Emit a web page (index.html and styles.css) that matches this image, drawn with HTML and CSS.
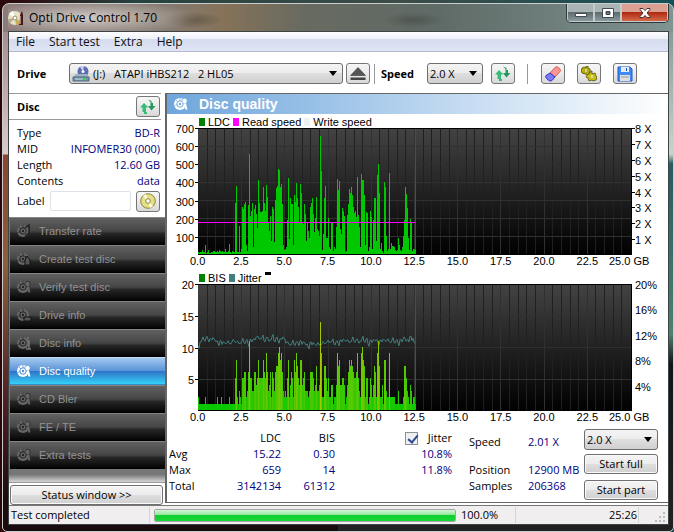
FILE: index.html
```
<!DOCTYPE html>
<html lang="en">
<head>
    <meta charset="UTF-8">
    <meta name="viewport" content="width=device-width, initial-scale=1.0">
    <title>Opti Drive Control 1.70</title>
    <link rel="stylesheet" href="styles.css">
</head>
<body>
    <!-- Shared icons -->
    <svg class="sprite" aria-hidden="true">
        <symbol id="refresh" viewBox="0 0 16 16">
            <path d="M4 4L0 8.500h2.500V13H4v2h3v-2H6V8.500h2.500z" fill="#35bd77"/>
            <path d="M8 .5L10.500 3v4H8l3.500 4.500L15.500 7H13V4h-1.500V2z" fill="#219a5b"/>
        </symbol>
        <symbol id="disc" viewBox="0 0 16 16">
            <circle cx="7" cy="8" r="6" fill="currentColor"/>
            <circle cx="7" cy="8" r="3.200" fill="none" stroke="var(--hole)" stroke-width="1"/>
            <circle cx="7" cy="8" r="1.200" fill="var(--hole)"/>
            <path d="M7 2v3M1.500 9.500l3-.8M3 4l2 2" stroke="var(--hole)" stroke-width=".7"/>
        </symbol>
        <symbol id="arrow" viewBox="0 0 8 5">
            <path d="M0 0h8L4 5z" fill="#000"/>
        </symbol>
        <symbol id="lens" viewBox="0 0 16 16">
            <circle cx="11.500" cy="5" r="2.700" fill="currentColor" stroke="var(--hole)" stroke-width=".7"/>
            <path d="M12 7.500l1.500 6" stroke="currentColor" stroke-width="2"/>
        </symbol>
    </svg>

    <div class="window">
        <header class="titlebar">
            <svg class="app-icon" viewBox="0 0 16 16">
                <circle cx="7" cy="8" r="7" fill="#e9e3c6"/>
                <path d="M7 8L1 4a7 7 0 0 1 4-3z" fill="#fff"/>
                <path d="M7 8l6 4a7 7 0 0 1-5 3z" fill="#c8ac55"/>
                <path d="M7 8L2 13a7 7 0 0 1-2-4z" fill="#b3ad92"/>
                <circle cx="7" cy="8" r="2" fill="#fff" stroke="#998f6c"/>
                <path d="M12 5l2-4 1 4v10h-4z" fill="#4a1712"/>
                <path d="M12 6v8" stroke="#eee"/>
            </svg>
            <h1>Opti Drive Control 1.70</h1>
            <div class="caption-buttons">
                <button class="caption" aria-label="Minimize"><svg viewBox="0 0 14 10"><path d="M1.500 5.500h11v3h-11z" fill="#fff" stroke="#444b52"/></svg></button>
                <button class="caption" aria-label="Maximize"><svg viewBox="0 0 14 10"><path d="M1.500 .5h11v9h-11zM5 3.500v3h4v-3z" fill="#fff" fill-rule="evenodd" stroke="#444b52"/></svg></button>
                <button class="caption close" aria-label="Close"><svg viewBox="0 0 14 10"><path d="M2 .5h3l2 2 2-2h3v1L9 5l3 3.500v1H9l-2-2-2 2H2v-1L5 5 2 1.500z" fill="#fff" stroke="#4a3030"/></svg></button>
            </div>
        </header>

        <div class="client">
            <nav class="menubar">
                <a href="#">File</a>
                <a href="#">Start test</a>
                <a href="#">Extra</a>
                <a href="#">Help</a>
            </nav>

            <div class="toolbar">
                <label class="drive-label" for="drive">Drive</label>
                <div class="combo drive">
                    <svg class="drive-icon" viewBox="0 0 18 16">
                        <circle cx="11" cy="5.500" r="5.500" fill="#5f6db0"/>
                        <path d="M11 5.500L8 1a5 5 0 0 1 4-1z" fill="#c8d2f2"/>
                        <circle cx="11" cy="5.500" r="1.500" fill="#fff"/>
                        <path d="M4 8h11l2 3H1z" fill="#9fb1bf"/>
                        <path d="M1 11h16v4H1z" fill="#7391a6" stroke="#4f6c82"/>
                        <path d="M3 13h8" stroke="#d5e2ea"/>
                        <path d="M12 12h2v2h-2z" fill="#3be55a"/>
                    </svg>
                    <select id="drive"><option>(J:)&nbsp;&nbsp; ATAPI iHBS212&nbsp;&nbsp; 2 HL05</option></select>
                    <svg class="arrow"><use href="#arrow"/></svg>
                </div>
                <button class="tool eject" aria-label="Eject">
                    <svg viewBox="0 0 16 16"><path d="M8 1.500l7.500 8H.5z" fill="#555" stroke="#222" stroke-width=".5"/><path d="M.5 11.500h15v2.500H.5z" fill="#444"/></svg>
                </button>
                <span class="separator"></span>
                <label class="speed-label" for="speed">Speed</label>
                <div class="combo speed">
                    <select id="speed"><option>2.0 X</option></select>
                    <svg class="arrow"><use href="#arrow"/></svg>
                </div>
                <button class="tool" aria-label="Refresh"><svg><use href="#refresh"/></svg></button>
                <span class="separator wide"></span>
                <div class="tool-group">
                    <button class="tool" aria-label="Erase disc">
                        <svg viewBox="0 0 16 16">
                            <path d="M5 7l5-5.500q1-1 2.500-.5l2 1.500q1.500 1.500.5 3L10 11z" fill="#f79a93" stroke="#e0544e"/>
                            <path d="M5 7l5 4-3 3.500q-1.500 1-3 0l-2.500-2q-1.500-1.500-.5-3z" fill="#7a7af5" stroke="#3434c4"/>
                        </svg>
                    </button>
                    <button class="tool" aria-label="Settings">
                        <svg viewBox="0 0 16 16">
                            <path d="M1 2l2-1 2 1V0h2v2l2 1v3l-2 3-3-1-3-1-1-3z" fill="#b5ae0a" stroke="#55500a" stroke-width=".8"/>
                            <path d="M7 8l2-1 1-2h1v3l3-1 1 3 1 1-1 3-3 1-1-1-3 1-1-3-2-1z" fill="#c8c010" stroke="#55500a" stroke-width=".8"/>
                            <path d="M5 3v3M11 9v3" stroke="#eee" stroke-width="1.200"/>
                        </svg>
                    </button>
                    <button class="tool" aria-label="Save">
                        <svg viewBox="0 0 16 16">
                            <path d="M1 1h12l2 2v12H1z" fill="#3f8af4" stroke="#1b58cc"/>
                            <path d="M4 1h8v5H4z" fill="#e5edf8"/><path d="M9 2h1v3H9z" fill="#1b58cc"/>
                            <path d="M3 9h10v6H3z" fill="#dedede"/><path d="M4 11h8" stroke="#999"/>
                        </svg>
                    </button>
                </div>
            </div>

            <div class="workspace">
                <aside class="sidebar">
                    <div class="disc-head">
                        <h2>Disc</h2>
                        <button class="tool" aria-label="Refresh disc"><svg><use href="#refresh"/></svg></button>
                    </div>
                    <div class="disc-info">
                        <dl>
                            <div><dt>Type</dt><dd>BD-R</dd></div>
                            <div><dt>MID</dt><dd>INFOMER30 (000)</dd></div>
                            <div><dt>Length</dt><dd>12.60 GB</dd></div>
                            <div><dt>Contents</dt><dd>data</dd></div>
                        </dl>
                        <div class="label-row">
                            <label for="disc-label">Label</label>
                            <input id="disc-label" type="text">
                            <button class="tool" aria-label="Read label">
                                <svg viewBox="0 0 16 16">
                                    <circle cx="8" cy="8" r="7.300" fill="#e6df86" stroke="#8a8440"/>
                                    <path d="M8 8L3 3a7 7 0 0 1 3-2zM8 8l5 5a7 7 0 0 1-3 2z" fill="#fffde0"/>
                                    <circle cx="8" cy="8" r="2.300" fill="#fff" stroke="#8a8440"/>
                                </svg>
                            </button>
                        </div>
                    </div>
                    <div class="tests">
                        <button class="test"><svg><use href="#disc"/><path d="M9 5l4-3v8l-4 3" fill="none" stroke="#222" stroke-width="1.500"/></svg>Transfer rate</button>
                        <button class="test"><svg><use href="#disc"/><path d="M11 5l3 4v5H9V9z" fill="#555" stroke="#111"/></svg>Create test disc</button>
                        <button class="test"><svg><use href="#disc"/><use href="#lens"/></svg>Verify test disc</button>
                        <button class="test"><svg><use href="#disc"/><path d="M8 10h7v4H8z" fill="#555" stroke="#111"/></svg>Drive info</button>
                        <button class="test"><svg><use href="#disc"/><path d="M12 2v2M11 6h2v8M10 14h5" fill="none" stroke="#777" stroke-width="1.500"/></svg>Disc info</button>
                        <button class="test active"><svg><use href="#disc"/><use href="#lens"/></svg>Disc quality</button>
                        <button class="test"><svg><use href="#disc"/><use href="#lens"/></svg>CD Bler</button>
                        <button class="test"><svg><use href="#disc"/><use href="#lens"/></svg>FE / TE</button>
                        <button class="test"><svg><use href="#disc"/><use href="#lens"/></svg>Extra tests</button>
                    </div>
                    <div class="status-toggle"><button class="push">Status window &gt;&gt;</button></div>
                </aside>

                <main class="panel">
                    <div class="panel-title">
                        <svg><use href="#disc"/><use href="#lens"/></svg>
                        <h2>Disc quality</h2>
                    </div>

                    <section class="chart">
                        <div class="legend">
                            <span><i class="key green"></i>LDC</span>
                            <span><i class="key magenta"></i>Read speed</span>
                            <span><i class="key pale"></i>Write speed</span>
                        </div>
                        <div class="plot-row">
                            <div class="axis left"><span>700</span><span>600</span><span>500</span><span>400</span><span>300</span><span>200</span><span>100</span></div>
                            <svg class="plot" id="ldc" viewBox="0 0 434 127" preserveAspectRatio="none"></svg>
                            <div class="axis right ticks"><span>8 X</span><span>7 X</span><span>6 X</span><span>5 X</span><span>4 X</span><span>3 X</span><span>2 X</span><span>1 X</span></div>
                        </div>
                        <div class="x-axis"><div class="x-steps"><span>0.0</span><span>2.5</span><span>5.0</span><span>7.5</span><span>10.0</span><span>12.5</span><span>15.0</span><span>17.5</span><span>20.0</span><span>22.5</span></div><span class="x-end">25.0 GB</span></div>
                    </section>

                    <section class="chart">
                        <div class="legend">
                            <span><i class="key green"></i>BIS</span>
                            <span><i class="key teal"></i>Jitter</span>
                            <span><i class="dash"></i></span>
                        </div>
                        <div class="plot-row">
                            <div class="axis left"><span>20</span><span>15</span><span>10</span><span>5</span></div>
                            <svg class="plot" id="bis" viewBox="0 0 434 127" preserveAspectRatio="none"></svg>
                            <div class="axis right"><span>20%</span><span>16%</span><span>12%</span><span>8%</span><span>4%</span></div>
                        </div>
                        <div class="x-axis"><div class="x-steps"><span>0.0</span><span>2.5</span><span>5.0</span><span>7.5</span><span>10.0</span><span>12.5</span><span>15.0</span><span>17.5</span><span>20.0</span><span>22.5</span></div><span class="x-end">25.0 GB</span></div>
                    </section>

                    <section class="results">
                        <table>
                            <thead>
                                <tr>
                                    <td></td><th>LDC</th><th>BIS</th>
                                    <th class="jitter"><div><input type="checkbox" id="jitter" checked><label for="jitter">Jitter</label></div></th>
                                </tr>
                            </thead>
                            <tbody>
                                <tr><th>Avg</th><td>15.22</td><td>0.30</td><td>10.8%</td></tr>
                                <tr><th>Max</th><td>659</td><td>14</td><td>11.8%</td></tr>
                                <tr><th>Total</th><td>3142134</td><td>61312</td><td></td></tr>
                            </tbody>
                        </table>
                        <dl class="progress-info">
                            <dt>Speed</dt><dd>2.01 X</dd>
                            <dt>Position</dt><dd>12900 MB</dd>
                            <dt>Samples</dt><dd>206368</dd>
                        </dl>
                        <div class="actions">
                            <div class="combo">
                                <select aria-label="Test speed"><option>2.0 X</option></select>
                                <svg class="arrow"><use href="#arrow"/></svg>
                            </div>
                            <button class="push">Start full</button>
                            <button class="push">Start part</button>
                        </div>
                    </section>
                </main>
            </div>

            <footer class="statusbar">
                <span class="message">Test completed</span>
                <progress value="100" max="100"></progress>
                <span class="percent">100.0%</span>
                <span class="time">25:26</span>
                <svg class="grip" viewBox="0 0 12 12"><path d="M9 2h2v2H9zM9 6h2v2H9zM9 10h2v2H9zM5 6h2v2H5zM5 10h2v2H5zM1 10h2v2H1z" fill="#bbb"/></svg>
            </footer>
        </div>
    </div>

    <script src="charts.js"></script>
</body>
</html>
```
FILE: styles.css
```
* {
    box-sizing: border-box;
}
body {
    margin: 0;
    min-height: 100vh;
    display: flex;
    padding: 3px 0 0 2px;
    font-family: "Open Sans", "Noto Sans", sans-serif;
    font-size: 11px;
    line-height: 16px;
    color: #000;
    background: linear-gradient(to right, #2c0508, #27423f 20%, #3d4c47 60%, #155058);
}
h1, h2, dl, dd, dt {
    margin: 0;
}
button, select, input {
    font: inherit;
    color: inherit;
    margin: 0;
    padding: 0;
}
.sprite {
    display: none;
}

/* Window frame */
.window {
    flex: 1;
    display: flex;
    flex-direction: column;
    padding: 0 4px 6px 5px;
    border: 1px solid #c9cfce;
    border-radius: 7px 7px 5px 5px;
    background:
        radial-gradient(ellipse 30px 8px at 190px 16px, rgba(60,50,35,0.4), rgba(60,50,35,0)) top / 100% 28px no-repeat,
        radial-gradient(ellipse 30px 8px at 410px 16px, rgba(60,65,60,0.5), rgba(60,65,60,0)) top / 100% 28px no-repeat,
        linear-gradient(to right, #8c7b78, #857a70 25%, #857258 33%, #686a60 45%, #5f6b67 65%, #7f9391) top / 100% 28px no-repeat,
        linear-gradient(to bottom, #9c7e80, #dccac6 150px, #8c4530 151px, #8d5f3c 260px, #501d22 400px, #180c0e 500px) left / 50% 100% no-repeat,
        linear-gradient(to bottom, #75908f, #c9d2cc 150px, #245c62 160px, #4f8070 330px, #11151c 360px, #222) right / 50% 100% no-repeat;
}
.titlebar {
    display: flex;
    align-items: center;
    height: 27px;
    background: radial-gradient(ellipse 110px 18px at 80px 14px, rgba(255,255,255,0.6), rgba(255,255,255,0));
}
.app-icon {
    width: 16px;
    height: 16px;
    margin-right: 5px;
}
.titlebar h1 {
    flex: 1;
    font-size: 12px;
    font-weight: normal;
}
.caption-buttons {
    align-self: flex-start;
    display: flex;
    border: 1px solid #30383a;
    border-top: none;
    border-radius: 0 0 5px 5px;
    overflow: hidden;
}
.caption {
    width: 27px;
    height: 18px;
    border: 1px solid #c3cccd;
    border-top: none;
    background: linear-gradient(#aab4b5 45%, #5f6c6f 50%, #8b9a9d);
    line-height: 0;
}
.caption svg {
    width: 14px;
    height: 10px;
}
.close {
    width: 47px;
    background: linear-gradient(#dba092 45%, #b02a12 50%, #d4694a);
}
.client {
    flex: 1;
    display: flex;
    flex-direction: column;
    background: #fff;
    border: 1px solid #3e4446;
}

/* Menu and toolbar */
.menubar {
    display: flex;
    gap: 14px;
    height: 20px;
    padding: 0 7px;
    border-bottom: 1px solid #b5bad0;
    background: linear-gradient(#fdfdff, #eef1fa 35%, #d5dcef 40%, #dfe5f5);
    font-size: 12px;
    line-height: 20px;
}
.menubar a {
    color: #111;
    text-decoration: none;
}
.toolbar {
    display: flex;
    align-items: center;
    height: 41px;
    padding: 2px 31px 0 8px;
    font-size: 11px;
}
.drive-label {
    width: 52px;
    font-weight: bold;
}
.combo {
    display: flex;
    align-items: center;
    height: 21px;
    padding: 0 5px 0 2px;
    border: 1px solid #6f6f6f;
    border-radius: 3px;
    background: linear-gradient(#f4f4f4, #ececec 48%, #dedede 50%, #d0d0d0);
}
.combo select {
    flex: 1;
    min-width: 0;
    appearance: none;
    border: none;
    background: none;
}
.arrow {
    width: 8px;
    height: 5px;
}
.combo.drive {
    flex: 1;
    margin-right: 3px;
}
.drive-icon {
    width: 18px;
    height: 16px;
    margin-right: 3px;
}
.combo.speed {
    width: 56px;
    margin-right: 8px;
}
.tool {
    display: flex;
    align-items: center;
    justify-content: center;
    width: 24px;
    height: 21px;
    border: 1px solid #777;
    border-radius: 3px;
    background: linear-gradient(#f6f6f6, #eaeaea 50%, #d8d8d8);
}
.tool svg {
    flex: none;
    width: 16px;
    height: 16px;
}
.separator {
    width: 1px;
    height: 20px;
    margin: 0 6px 0 4px;
    background: #999;
}
.separator.wide {
    margin: 0 13px 0 12px;
}
.speed-label {
    width: 46px;
    font-weight: bold;
}
.tool-group {
    display: flex;
    gap: 12px;
}

/* Sidebar */
.workspace {
    flex: 1;
    display: flex;
    border-bottom: 1px solid #777;
}
.sidebar {
    display: flex;
    flex-direction: column;
    width: 156px;
}
.disc-head {
    display: flex;
    align-items: center;
    justify-content: space-between;
    height: 27px;
    margin-right: 4px;
    padding: 0 1px 0 8px;
    border-top: 1px solid #999;
    border-bottom: 1px solid #999;
}
.disc-head h2 {
    font-size: 11px;
}
.disc-info {
    padding: 5px 5px 4px 8px;
}
.disc-info dl div {
    display: flex;
    justify-content: space-between;
}
dd {
    color: #000080;
}
.label-row {
    display: flex;
    align-items: center;
    height: 24px;
}
.label-row label {
    width: 33px;
}
.label-row input {
    flex: 1;
    min-width: 0;
    height: 20px;
    margin-right: 5px;
    border: 1px solid #dfe1e8;
    border-radius: 2px;
}
.tests {
    flex: 1;
    padding-left: 1px;
    background: linear-gradient(#777 250px, #777, #d5d5d5);
}
.test {
    --hole: #222;
    display: flex;
    align-items: center;
    width: 100%;
    height: 28px;
    padding-left: 6px;
    border: none;
    border-top: 1px solid #858585;
    border-bottom: 1px solid #000;
    background: linear-gradient(#616161, #454545 50%, #262626 60%, #050505);
    font-family: "Liberation Sans", Arial, sans-serif;
    font-size: 11px;
    color: #929292;
}
.test svg {
    width: 16px;
    height: 16px;
    margin-right: 7px;
    color: #666;
}
.test.active {
    --hole: #4d8fd8;
    border-top-color: #c4dcf5;
    border-bottom-color: #2e8fc4;
    background: linear-gradient(#a3c8f0, #5a94d8 48%, #2f74c8 52%, #34d2f8);
    color: #fff;
}
.test.active svg {
    color: #fff;
}
.status-toggle {
    padding: 2px 2px 0 1px;
    border-top: 1px solid #999;
}
.push {
    width: 100%;
    height: 20px;
    border: 1px solid #707070;
    border-radius: 3px;
    background: linear-gradient(#f4f4f4, #ececec 48%, #dedede 50%, #d0d0d0);
    box-shadow: inset 0 0 0 1px #fafafa;
    line-height: 16px;
}

/* Disc quality panel */
.panel {
    flex: 1;
    min-width: 0;
    margin-bottom: 2px;
    border: 1px solid #666;
    border-left-width: 2px;
    border-right: none;
}
.panel-title {
    --hole: #75aadd;
    display: flex;
    align-items: center;
    height: 20px;
    padding-left: 6px;
    background: linear-gradient(to right, #6ea6dc, #b0cfec 45%, #fff);
    color: #fff;
}
.panel-title svg {
    width: 16px;
    height: 16px;
    margin-right: 10px;
}
.panel-title h2 {
    font-family: "Liberation Sans", Arial, sans-serif;
    font-size: 14px;
}
.chart {
    font-family: "Liberation Sans", Arial, sans-serif;
    font-size: 11px;
}
.legend {
    display: flex;
    gap: 3px;
    height: 14px;
    padding: 2px 0 0 32px;
    line-height: 12px;
}
.legend span {
    display: flex;
    align-items: center;
}
.key {
    width: 6px;
    height: 8px;
    margin-right: 3px;
}
.green {
    background: #008000;
}
.magenta {
    background: #ff00ff;
}
.pale {
    background: #f0f0f0;
}
.teal {
    background: #408080;
}
.dash {
    width: 6px;
    height: 3px;
    margin-bottom: 9px;
    background: #000;
}
.plot-row {
    display: flex;
    height: 127px;
}
.plot {
    flex: 1;
    min-width: 0;
    height: 127px;
}
.axis {
    display: flex;
    flex-direction: column;
}
.axis span {
    flex: 1;
    display: flex;
    align-items: flex-start;
    line-height: 2px;
}
.axis.left {
    width: 31px;
}
.axis.left span {
    justify-content: flex-end;
}
.axis.left span::after {
    content: "";
    width: 3px;
    height: 1px;
    margin-left: 1px;
    background: #000;
}
.axis.right {
    width: 36px;
    padding-left: 3px;
}
.axis.ticks {
    padding-left: 0;
}
.axis.ticks span::before {
    content: "";
    width: 3px;
    height: 1px;
    background: #000;
}
.x-axis {
    display: flex;
    height: 15px;
    padding-left: 9px;
    line-height: 13px;
}
.x-steps {
    flex: 1;
    display: flex;
}
.x-steps span {
    flex: 1;
    text-align: center;
}
.x-end {
    width: 59px;
}

/* Results */
.results {
    display: flex;
    align-items: flex-start;
    padding: 3px 10px 0 2px;
}
.results table {
    width: 283px;
    margin-top: 1px;
    border-collapse: collapse;
    table-layout: fixed;
}
.results th, .results td {
    height: 16px;
    padding: 0;
    font-weight: normal;
    line-height: 16px;
    text-align: right;
}
.results tr > :nth-child(1) {
    width: 40px;
}
.results tr > :nth-child(2) {
    width: 72px;
}
.results tr > :nth-child(3) {
    width: 54px;
}
.results tbody th {
    text-align: left;
}
.results tbody td {
    color: #000080;
}
.jitter div {
    display: flex;
    align-items: center;
    justify-content: flex-end;
    gap: 10px;
}
.jitter input {
    appearance: none;
    width: 13px;
    height: 13px;
    border: 1px solid #8e8f8f;
    background: #eef0f4;
}
.jitter input:checked::before {
    content: "";
    display: block;
    width: 4px;
    height: 8px;
    margin: 0 0 0 4px;
    border: solid #2f4a90;
    border-width: 0 2px 2px 0;
    transform: rotate(40deg);
}
.progress-info {
    flex: 1;
    display: grid;
    grid-template-columns: 59px 1fr;
    grid-template-rows: 28px 16px 16px;
    margin: 5px 0 0 17px;
    white-space: nowrap;
}
.actions {
    display: flex;
    flex-direction: column;
    gap: 4px;
    width: 74px;
}
.actions .push:last-child {
    margin-top: 2px;
}

/* Status bar */
.statusbar {
    display: flex;
    align-items: center;
    height: 18px;
    background: #f0eeee;
}
.statusbar span {
    height: 16px;
    border-right: 1px solid #d5d5d5;
}
.message {
    width: 141px;
    padding-left: 2px;
}
.statusbar progress {
    flex: 1;
    min-width: 0;
    height: 13px;
    margin: 0 1px 0 4px;
    appearance: none;
    border: 1px solid #a5a5a5;
    border-radius: 2px;
    overflow: hidden;
}
progress::-webkit-progress-bar {
    background: #e6e6e6;
}
progress::-webkit-progress-value {
    background: linear-gradient(#d2f5d5, #90e79a 45%, #0fce2e 50%, #18d838);
}
.percent {
    width: 59px;
    padding-left: 4px;
}
.time {
    width: 123px;
    padding-right: 1px;
    text-align: right;
}
.grip {
    align-self: flex-end;
    width: 12px;
    height: 12px;
    margin: 0 2px 2px 15px;
}
```
FILE: charts.js
```
// One sample per column, from 0 to 12.6 GB
const ldc = [
    12, 8, 10, 10, 20, 10, 10, 50, 8, 10, 20, 8, 8, 10, 10, 15, 15, 10, 10, 15,
    10, 20, 15, 12, 15, 10, 12, 28, 10, 12, 15, 55, 10, 8, 15, 10, 12,
    285, 380, 10, 10, 155, 12, 25, 260, 250, 275, 290, 50, 15, 270, 555, 210, 240, 285, 40,
    250, 270, 220, 145, 410, 285, 235, 235, 240, 370, 285, 240, 385, 315, 170, 130, 210, 70, 260,
    250, 65, 300, 365, 380, 470, 465, 370, 390, 280, 50, 20, 25, 40, 190, 420, 85, 310, 280,
    275, 50, 330, 290, 395, 310, 260, 180, 390, 340, 180, 165, 280, 220, 70, 170, 130, 90, 260,
    285, 310, 220, 120, 200, 315, 140, 130, 100, 655, 460, 20, 110, 310, 380, 90, 90, 200, 40,
    25, 175, 180, 15, 40, 25, 150, 415, 355, 405, 140, 110, 255, 240, 210, 10, 15, 215, 280,
    360, 340, 370, 330, 260, 225, 240, 205, 425, 215, 150, 40, 445, 410, 410, 325, 50, 235, 225,
    15, 40, 240, 205, 25, 190, 310, 310, 70, 440, 500, 340, 30, 60, 15, 5, 400, 370, 100,
    15, 30, 450, 30, 60, 45, 45, 40, 20, 15, 20, 90, 50, 20, 15, 40, 100, 190, 370, 335,
    255, 90, 20, 195, 170, 15, 30, 25, 20
];
const bis = [
    2, 1, 1, 1, 1, 1, 1, 2, 1, 1, 1, 1, 1, 1, 1, 1, 1, 1, 1, 2,
    1, 1, 1, 2, 1, 1, 1, 1, 1, 1, 1, 2, 1, 1, 1, 1, 1,
    5, 8, 2, 1, 3, 2, 1, 5, 5, 6, 6, 2, 3, 6, 11, 5, 5, 3, 3,
    6, 6, 4, 5, 8, 5, 5, 5, 5, 8, 6, 5, 9, 6, 3, 4, 6, 2, 6,
    5, 3, 6, 7, 7, 9, 10, 8, 9, 6, 3, 2, 3, 2, 5, 8, 2, 4, 6,
    5, 2, 8, 6, 9, 7, 5, 4, 8, 8, 4, 5, 6, 3, 3, 3, 2, 3, 6,
    6, 6, 5, 3, 4, 7, 3, 3, 4, 14, 9, 2, 2, 7, 7, 5, 3, 5, 2,
    2, 4, 4, 1, 2, 2, 4, 9, 7, 8, 4, 4, 5, 5, 4, 1, 2, 4, 6,
    8, 7, 8, 7, 6, 5, 5, 6, 9, 5, 3, 2, 9, 10, 8, 7, 2, 5, 5,
    1, 2, 5, 4, 2, 4, 7, 6, 2, 9, 11, 7, 2, 2, 4, 1, 8, 8, 3,
    2, 2, 9, 2, 2, 2, 2, 2, 1, 1, 1, 3, 1, 1, 1, 1, 2, 7, 7, 5,
    3, 2, 1, 4, 3, 1, 2, 2, 1
];
// Jitter in tenths of a grid unit, every second column
const jitter = [
    102, 108, 112, 111, 115, 112, 113, 111, 113, 108, 106, 110, 104, 108, 105, 110, 105, 108, 110, 107,
    109, 106, 110, 107, 110, 105, 112, 108, 113, 115, 117, 113, 115, 110, 114, 113, 111, 116, 110, 114,
    110, 113, 112, 114, 106, 108, 103, 107, 104, 107, 106, 110, 104, 108, 103, 101, 108, 103, 106, 102,
    107, 103, 105, 107, 106, 111, 108, 109, 105, 108, 106, 111, 108, 112, 109, 111, 108, 112, 109, 111,
    110, 109, 113, 109, 112, 105, 111, 107, 112, 110, 107, 111, 108, 112, 109, 113, 107, 111, 108, 110,
    106, 112, 108, 116, 109, 112, 117, 110, 108
];

const WIDTH = 434;
const HEIGHT = 127;
const SCAN_END = 217;

function rect(x, y, w, h, fill) {
    return `<rect x="${x}" y="${y}" width="${w}" height="${h}" fill="${fill}"/>`;
}

function background(id, rows) {
    let out = `<defs><linearGradient id="${id}-bg" x1="0" y1="0" x2="0" y2="1">
        <stop offset="0" stop-color="#434343"/><stop offset="1" stop-color="#000"/></linearGradient></defs>`;
    out += rect(0, 0, WIDTH, HEIGHT, `url(#${id}-bg)`);
    for (let i = 1; i < 50; i++) {
        out += rect(Math.round(i * 8.64), 1, 1, HEIGHT - 2, i % 5 === 0 ? '#303030' : '#202020');
    }
    for (let i = 1; i < rows; i++) {
        out += rect(1, Math.round(i * 126 / rows), WIDTH - 2, 1, '#303030');
    }
    return out;
}

function bars(values, max, color) {
    return values.map((v, i) => {
        const h = Math.round(v / max * 126);
        return rect(i, HEIGHT - 1 - h, 1, h, color(v));
    }).join('');
}

function frame() {
    return rect(0, 0, WIDTH, 1, '#000') + rect(WIDTH - 1, 0, 1, HEIGHT, '#000') +
        rect(SCAN_END, 1, 1, HEIGHT - 2, '#f00');
}

document.getElementById('ldc').innerHTML =
    background('ldc', 7) + frame() + bars(ldc, 700, () => '#00c800') +
    rect(0, 94, SCAN_END, 1, '#ff00ff');

// Alternate samples swing a little around the reading
const points = jitter.map((v, i) => {
    const swing = (i * 7 % 5 - 2) * 2;
    return `${i * 2},${126 - v * 0.63} ${i * 2 + 1},${126 - (v + swing) * 0.63}`;
}).join(' ');
document.getElementById('bis').innerHTML =
    background('bis', 4) + frame() +
    `<polyline points="${points}" fill="none" stroke="#408080"/>` +
    bars(bis, 20, v => `rgb(${v > 1 ? v * 12 : 10}, 200, 0)`);
```
